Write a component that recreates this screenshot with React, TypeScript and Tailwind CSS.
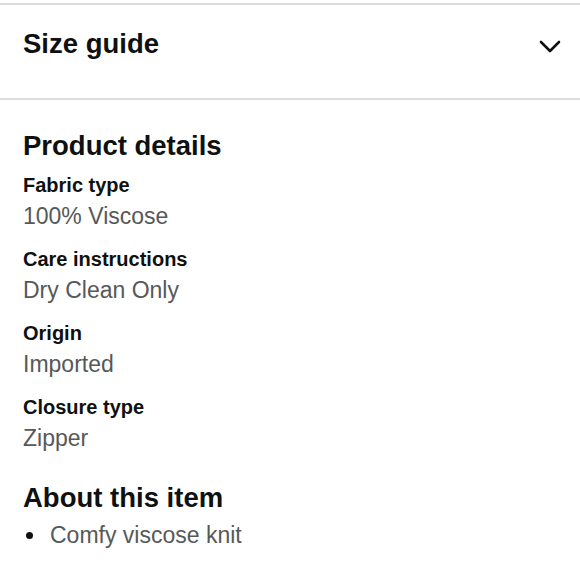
import React from 'react';

const details = [
  { label: 'Fabric type', value: '100% Viscose' },
  { label: 'Care instructions', value: 'Dry Clean Only' },
  { label: 'Origin', value: 'Imported' },
  { label: 'Closure type', value: 'Zipper' },
];

export default function App() {
  return (
    <div
      className="w-[580px] h-[580px] bg-white overflow-hidden text-[#0f1111]"
      style={{ fontFamily: '"Liberation Sans", Arial, sans-serif' }}
    >
      {/* Size guide accordion */}
      <div className="mt-[3px] border-t-2 border-b-2 border-[#dddddd]">
        <button
          type="button"
          className="w-full flex items-start justify-between pl-[23px] pr-[19px] pt-[23px] h-[93px]"
        >
          <span className="text-[27.5px] leading-[31px] font-bold">Size guide</span>
          <svg width="22" height="16" viewBox="0 0 22 16" className="mt-[10px]">
            <polyline
              points="2,4 11,13 20,4"
              fill="none"
              stroke="#0f1111"
              strokeWidth="2.6"
              strokeLinecap="round"
              strokeLinejoin="round"
            />
          </svg>
        </button>
      </div>

      {/* Product details */}
      <div className="px-[23px] pt-[30px]">
        <h2 className="text-[27.5px] leading-[31px] font-bold">Product details</h2>
        <div className="mt-[12px] flex flex-col gap-[17px]">
          {details.map((d) => (
            <div key={d.label}>
              <div className="text-[20px] leading-[24px] font-bold">{d.label}</div>
              <div className="mt-[5px] text-[23px] leading-[28px] text-[#565959]">{d.value}</div>
            </div>
          ))}
        </div>

        <h2 className="mt-[30px] text-[27.5px] leading-[31px] font-bold">About this item</h2>
        <ul className="mt-[7px]">
          <li className="flex items-center text-[23px] leading-[30px] text-[#565959]">
            <span className="w-[7px] h-[7px] rounded-full bg-[#0f1111] ml-[3px] mr-[17px]" />
            Comfy viscose knit
          </li>
        </ul>
      </div>
    </div>
  );
}
